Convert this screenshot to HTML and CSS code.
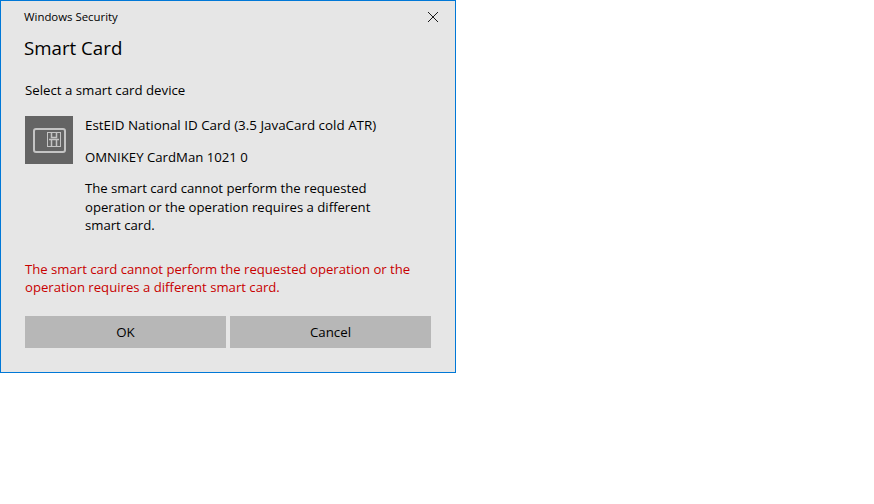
FILE: index.html
```html
<!DOCTYPE html>
<html lang="en">

<head>
    <meta charset="UTF-8">
    <title>Windows Security</title>
    <link rel="stylesheet" href="styles.css">
</head>

<body>
    <div class="dialog">
        <div class="title-bar">
            <span class="app-name">Windows Security</span>
            <svg class="close-icon" width="12" height="12" viewBox="0 0 12 12">
                <path d="M1 1L11 11M11 1L1 11" stroke="#1a1a1a" stroke-width="1" fill="none" />
            </svg>
        </div>
        <h1>Smart Card</h1>
        <p class="prompt">Select a smart card device</p>
        <div class="device">
            <div class="device-icon">
                <svg width="48" height="48" viewBox="0 0 48 48">
                    <rect x="9" y="13" width="31" height="23" rx="2" fill="none" stroke="#c4c4c4" stroke-width="2" />
                    <rect x="22.5" y="16.5" width="13" height="14" fill="none" stroke="#c4c4c4" />
                    <path d="M26.5 17V21.5H31.5V17M24 23.5H34M26.5 24V30M31.5 24V30" fill="none" stroke="#c4c4c4" stroke-width="1.5" />
                </svg>
            </div>
            <div class="device-info">
                <p class="device-name">EstEID National ID Card (3.5 JavaCard cold ATR)</p>
                <p class="device-reader">OMNIKEY CardMan 1021 0</p>
                <p class="device-status">The smart card cannot perform the requested operation or the operation requires a different smart card.</p>
            </div>
        </div>
        <p class="error">The smart card cannot perform the requested operation or the operation requires a different smart card.</p>
        <div class="buttons">
            <button class="btn">OK</button>
            <button class="btn">Cancel</button>
        </div>
    </div>
</body>

</html>
```

FILE: styles.css
```css
/* General Styles */
body {
    margin: 0;
    background-color: #fff;
    font-family: 'Open Sans', 'Noto Sans', Arial, sans-serif;
    color: #000;
}

h1, p {
    margin: 0;
    padding: 0;
}

/* Dialog */
.dialog {
    box-sizing: border-box;
    width: 456px;
    height: 373px;
    padding: 0 24px;
    background-color: #e6e6e6;
    border: 1px solid #0078d7;
}

.title-bar {
    display: flex;
    justify-content: space-between;
    align-items: center;
    height: 31px;
}

.app-name {
    font-size: 11.4px;
    margin-left: -1px;
}

.close-icon {
    margin-right: -8px;
}

h1 {
    font-size: 18.7px;
    font-weight: 400;
    line-height: 30px;
    margin-top: 1px;
    margin-left: -1px;
}

.prompt {
    font-size: 13.25px;
    line-height: 18px;
    margin-top: 18px;
}

/* Device row */
.device {
    display: flex;
    gap: 12px;
    margin-top: 17px;
}

.device-icon {
    width: 48px;
    height: 48px;
    background-color: #646464;
    flex-shrink: 0;
}

.device-info {
    width: 300px;
    font-size: 13.4px;
    line-height: 18px;
}

.device-reader {
    margin-top: 14px;
    font-size: 13.2px;
}

.device-status {
    margin-top: 13px;
    font-size: 13.15px;
    line-height: 18.5px;
}

.error {
    width: 400px;
    margin-top: 25px;
    font-size: 13.15px;
    line-height: 18px;
    color: #c80000;
}

/* Buttons */
.buttons {
    display: flex;
    gap: 4px;
    margin-top: 20px;
}

.btn {
    width: 201px;
    height: 32px;
    padding: 0;
    border: none;
    background-color: #b7b7b7;
    color: #000;
    font-family: inherit;
    font-size: 13.3px;
}
```
